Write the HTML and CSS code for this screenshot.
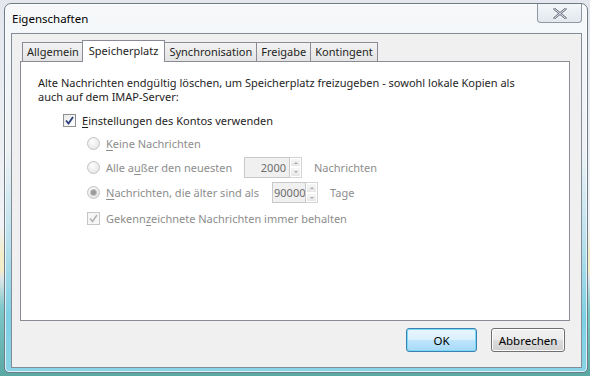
FILE: index.html
```html
<!DOCTYPE html>
<html lang="de">
<head>
    <meta charset="UTF-8">
    <title>Eigenschaften</title>
    <link rel="stylesheet" href="styles.css">
</head>
<body>
    <div class="desk">
        <div class="window">
            <div class="titlebar">
                <span class="title">Eigenschaften</span>
                <div class="closebtn">
                    <svg width="14" height="11" viewBox="0 0 14 11">
                        <path d="M1.5 1 L12.5 10 M12.5 1 L1.5 10" stroke="#fff" stroke-width="4" stroke-linecap="round"/>
                        <path d="M1.5 1 L12.5 10 M12.5 1 L1.5 10" stroke="#6b7584" stroke-width="2.4" stroke-linecap="round"/>
                        <path d="M1.5 1 L12.5 10 M12.5 1 L1.5 10" stroke="#e9edf2" stroke-width="0.9" stroke-linecap="round"/>
                    </svg>
                </div>
            </div>
            <div class="client">
                <div class="tabs">
                    <div class="tab">Allgemein</div>
                    <div class="tab active">Speicherplatz</div>
                    <div class="tab">Synchronisation</div>
                    <div class="tab">Freigabe</div>
                    <div class="tab">Kontingent</div>
                </div>
                <div class="panel">
                    <p class="intro">Alte Nachrichten endgültig löschen, um Speicherplatz freizugeben - sowohl lokale Kopien als<br>auch auf dem IMAP-Server:</p>
                    <div class="row lvl1">
                        <span class="check on"><svg width="9" height="9" viewBox="0 0 9 9"><path d="M1 4.5 L3.5 7.5 L8 1" fill="none" stroke="#2b3e7a" stroke-width="1.8"/></svg></span>
                        <span><u>E</u>instellungen des Kontos verwenden</span>
                    </div>
                    <div class="row lvl2 off r1">
                        <span class="radio"></span>
                        <span><u>K</u>eine Nachrichten</span>
                    </div>
                    <div class="row lvl2 off r2">
                        <span class="radio"></span>
                        <span class="lbl-a">Alle a<u>u</u>ßer den neuesten</span>
                        <span class="num w45">2000</span>
                        <span class="spin"><i class="up"></i><i class="dn"></i></span>
                        <span class="after">Nachrichten</span>
                    </div>
                    <div class="row lvl2 off r3">
                        <span class="radio sel"><i></i></span>
                        <span class="lbl-b"><u>N</u>achrichten, die älter sind als</span>
                        <span class="num w34 left">900000</span>
                        <span class="spin"><i class="up"></i><i class="dn"></i></span>
                        <span class="after">Tage</span>
                    </div>
                    <div class="row lvl2 off r4">
                        <span class="check dis"><svg width="9" height="9" viewBox="0 0 9 9"><path d="M1 4.5 L3.5 7.5 L8 1" fill="none" stroke="#b4b4b4" stroke-width="1.6"/></svg></span>
                        <span>Gekenn<u>z</u>eichnete Nachrichten immer behalten</span>
                    </div>
                </div>
                <div class="buttons">
                    <button class="btn default">OK</button>
                    <button class="btn">Abbrechen</button>
                </div>
            </div>
        </div>
    </div>
</body>
</html>
```

FILE: styles.css
```css
*{
    box-sizing: border-box;
}
body{
    margin: 0;
    width: 590px;
    height: 376px;
    overflow: hidden;
    font-family: "Noto Sans", "Open Sans", sans-serif;
    font-size: 11px;
    color: #1e1e1e;
    background: linear-gradient(#e4e8ee 0%, #f1f3f6 60%, #f3edc9 68%, #f3edc9 72%, #dfe6ea 74%, #7dc8c8 82%, #5aa8a4 100%);
}
.desk{
    padding: 3px 2px 3px 4px;
    height: 100%;
}
.window{
    height: 370px;
    background: linear-gradient(#f6f8fa, #eef2f5 40%, #bfe3ee 62%, #7fd0e4 85%, #89d4e6);
    border: 1px solid #6f7b86;
    border-radius: 7px 7px 5px 5px;
    padding: 0 5px 4px 6px;
    display: flex;
    flex-direction: column;
    box-shadow: inset 0 0 0 1px rgba(255,255,255,0.7);
}
.titlebar{
    height: 29px;
    display: flex;
    align-items: flex-start;
    justify-content: space-between;
}
.title{
    padding: 7px 0 0 1px;
    font-size: 11.5px;
    color: #000;
}
.closebtn{
    width: 45px;
    height: 19px;
    border: 1px solid #8e98a4;
    border-top: none;
    border-radius: 0 0 4px 4px;
    background: linear-gradient(#f3f6f9, #e2e8ee);
    display: flex;
    align-items: center;
    justify-content: center;
}
.client{
    flex: 1;
    background: #f0f0f0;
    border: 1px solid #838d97;
    padding: 6px 11px 0 8px;
    display: flex;
    flex-direction: column;
}
.tabs{
    display: flex;
    align-items: flex-end;
    height: 21px;
    padding-left: 2px;
    position: relative;
    z-index: 1;
}
.tab{
    height: 19px;
    padding: 0 4px;
    line-height: 17px;
    border: 1px solid #898c95;
    border-bottom: none;
    background: linear-gradient(#f2f2f2, #e4e4e4);
    margin-right: -1px;
    white-space: nowrap;
}
.tab.active{
    height: 22px;
    background: #fff;
    margin: 0 -1px -1px -1px;
    padding: 0 6px;
    line-height: 19px;
    position: relative;
    z-index: 2;
}
.panel{
    height: 260px;
    background: #fff;
    border: 1px solid #898c95;
    padding: 14px 0 0 17px;
    color: #1e1e1e;
}
.intro{
    margin: 0 0 4px 0;
    line-height: 14px;
    white-space: nowrap;
}
.row{
    display: flex;
    align-items: center;
    height: 24px;
}
.lvl1{
    padding-left: 25px;
}
.lvl2{
    padding-left: 49px;
}
.off{
    color: #8d8d8d;
}
.r1{
    height: 23px;
}
.r2{
    height: 24px;
}
.r3{
    height: 27px;
}
.r4{
    height: 25px;
}
.check{
    width: 13px;
    height: 13px;
    border: 1px solid #8e8f8f;
    background: linear-gradient(135deg, #dcdcdc, #fafafa);
    margin-right: 6px;
    display: flex;
    align-items: center;
    justify-content: center;
}
.check.on{
    background: linear-gradient(135deg, #e9e9e9, #fff);
}
.check.dis{
    border-color: #c6c6c6;
    background: #f6f6f6;
}
.radio{
    width: 13px;
    height: 13px;
    border-radius: 50%;
    border: 1px solid #c3c3c3;
    background: radial-gradient(circle at 40% 35%, #fdfdfd, #e0e0e0);
    margin-right: 6px;
    display: flex;
    align-items: center;
    justify-content: center;
}
.radio.sel i{
    width: 5px;
    height: 5px;
    border-radius: 50%;
    background: #9a9a9a;
    box-shadow: 0 0 0 1px #c2c2c2;
}
u{
    text-decoration-thickness: 1px;
    text-underline-offset: 2px;
}
.lbl-a{
    width: 138px;
}
.lbl-b{
    width: 166px;
}
.num{
    height: 21px;
    border: 1px solid #c9c9c9;
    background: #f0f0f0;
    text-align: right;
    padding: 2px 3px 0 0;
    color: #6d6d6d;
    line-height: 16px;
    overflow: hidden;
    white-space: nowrap;
}
.num.left{
    text-align: left;
    padding: 2px 0 0 1px;
}
.w45{
    width: 46px;
}
.w34{
    width: 34px;
}
.spin{
    width: 12px;
    height: 21px;
    display: flex;
    flex-direction: column;
    border: 1px solid #d4d4d4;
    border-left: none;
}
.spin i{
    flex: 1;
    background: linear-gradient(#f7f7f7, #e6e6e6);
    border: 1px solid #fff;
    position: relative;
}
.spin i::after{
    content: "";
    position: absolute;
    left: 3px;
    top: 3px;
    border-left: 2px solid transparent;
    border-right: 2px solid transparent;
}
.spin i.up::after{
    border-bottom: 2px solid #a9a9a9;
}
.spin i.dn::after{
    border-top: 2px solid #a9a9a9;
}
.after{
    margin-left: 12px;
}
.buttons{
    display: flex;
    justify-content: flex-end;
    gap: 14px;
    padding: 7px 5px 0 0;
}
.btn{
    font-family: "Noto Sans", "Open Sans", sans-serif;
    font-size: 11.5px;
    color: #000;
    height: 24px;
    border: 1px solid #707070;
    border-radius: 3px;
    background: linear-gradient(#f2f2f2 0%, #ebebeb 49%, #dddddd 50%, #cfcfcf 100%);
    box-shadow: inset 0 0 0 1px #fcfcfc;
    width: 74px;
    padding: 0;
}
.btn.default{
    width: 71px;
    border-color: #3c7fb1;
    background: linear-gradient(#eaf6fd 0%, #d9f0fc 49%, #bee6fd 50%, #a7d9f5 100%);
    box-shadow: inset 0 0 0 1px #7ad9f7;
}
```
